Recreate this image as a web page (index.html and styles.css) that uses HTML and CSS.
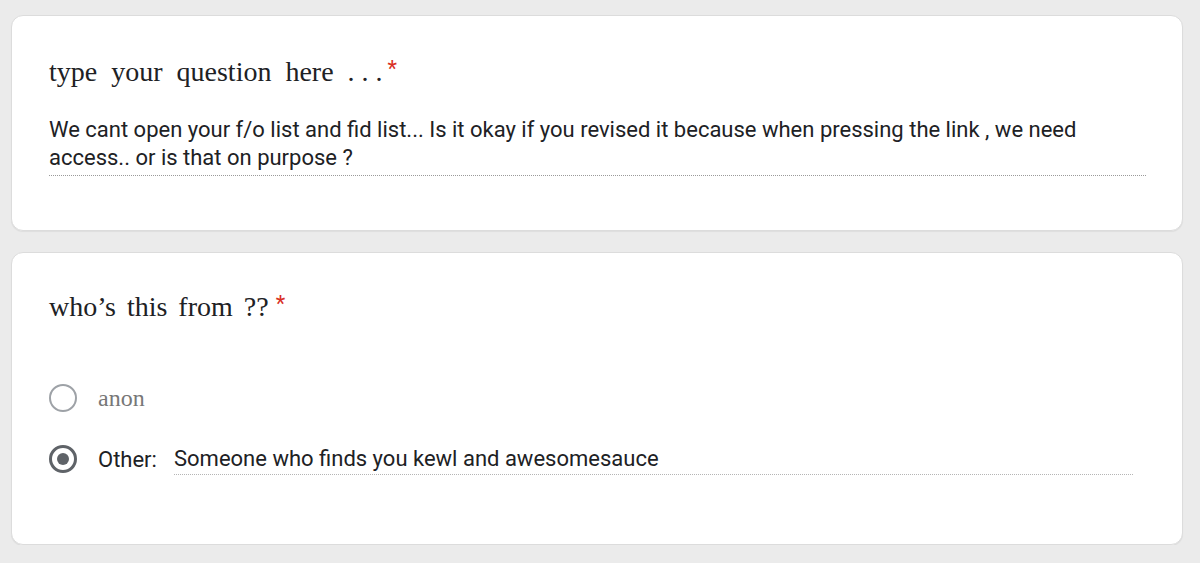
FILE: index.html
```html
<!DOCTYPE html>
<html>
<head>
<meta charset="utf-8">
<link rel="stylesheet" href="styles.css">
</head>
<body>
<div class="page">
  <section class="card card-q">
    <h2 class="title">type your question here <span class="dots">...</span><span class="req">*</span></h2>
    <div class="answer">We cant open your f/o list and fid list... Is it okay if you revised it because when pressing the link , we need access.. or is that on purpose ?</div>
  </section>
  <section class="card card-r">
    <h2 class="title title-tight">who’s this from ??<span class="req req-gap">*</span></h2>
    <div class="options">
      <div class="opt">
        <span class="radio"></span>
        <span class="opt-label">anon</span>
      </div>
      <div class="opt">
        <span class="radio checked"></span>
        <span class="other-label">Other:</span>
        <span class="other-input">Someone who finds you kewl and awesomesauce</span>
      </div>
    </div>
  </section>
</div>
</body>
</html>
```
FILE: styles.css
```css
html, body {
  margin: 0;
  padding: 0;
  background: #ebebeb;
}
.page {
  display: flex;
  flex-direction: column;
  gap: 21px;
  padding: 15px 17px 0 11px;
}
.card {
  background: #fff;
  border: 1px solid #dcdcdc;
  border-radius: 12px;
  box-shadow: 0 1px 1px rgba(0,0,0,0.06);
  box-sizing: border-box;
  padding: 0 37px;
}
.card-q { height: 216px; padding-top: 37px; }
.card-r { height: 293px; padding-top: 35px; }
.title {
  margin: 0;
  font-family: "Liberation Serif", "DejaVu Serif", serif;
  font-weight: normal;
  font-size: 28px;
  line-height: 32px;
  color: #202124;
  word-spacing: 7px;
}
.title-tight {
  word-spacing: 4px;
}
.dots {
  letter-spacing: 7px;
}
.req {
  color: #d93025;
  margin-left: -2px;
  font-family: "Roboto", sans-serif;
  font-size: 22px;
  vertical-align: 5px;
}
.req-gap {
  margin-left: 7px;
}
.answer {
  margin-top: 28px;
  font-family: "Roboto", sans-serif;
  font-size: 22px;
  line-height: 28px;
  color: #202124;
  padding-bottom: 3px;
  border-bottom: 1px dotted #9a9a9a;
  width: 1097px;
}
.options {
  display: flex;
  flex-direction: column;
  gap: 33px;
  margin-top: 61px;
}
.opt {
  display: flex;
  align-items: center;
  height: 28px;
}
.radio {
  width: 28px;
  height: 28px;
  box-sizing: border-box;
  border: 2.5px solid #9ea2a7;
  border-radius: 50%;
  margin-left: 0;
  margin-right: 21px;
  flex: none;
  position: relative;
}
.radio.checked {
  border-color: #5f6368;
  border-width: 3px;
}
.radio.checked::after {
  content: "";
  position: absolute;
  left: 5px; top: 5px;
  width: 12px; height: 12px;
  border-radius: 50%;
  background: #5f6368;
}
.opt-label {
  font-family: "Liberation Serif", "DejaVu Serif", serif;
  font-size: 24px;
  color: #777;
}
.other-label {
  font-family: "Roboto", sans-serif;
  font-size: 22px;
  color: #202124;
  width: 76px;
  flex: none;
}
.other-input {
  font-family: "Roboto", sans-serif;
  font-size: 22px;
  line-height: 26px;
  color: #202124;
  width: 959px;
  padding-top: 3px;
  padding-bottom: 2px;
  border-bottom: 1px dotted #b5b5b5;
}
```
